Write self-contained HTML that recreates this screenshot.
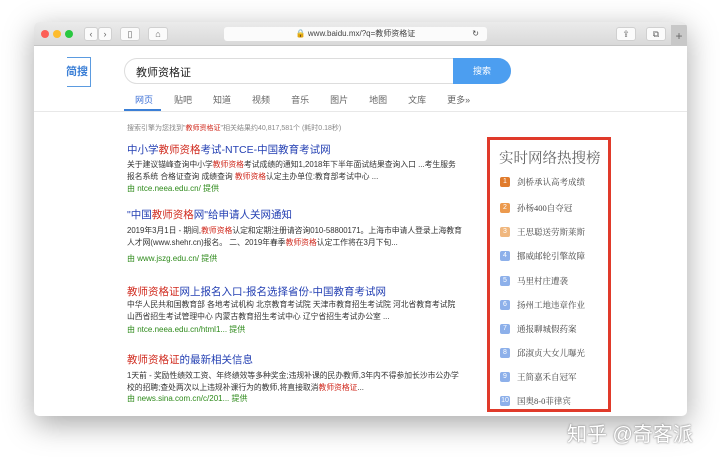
<!DOCTYPE html>
<html><head><meta charset="utf-8"><style>
*{margin:0;padding:0;box-sizing:border-box}
body{width:720px;height:463px;background:#fff;position:relative;overflow:hidden;font-family:"Liberation Sans","Noto Sans CJK SC",sans-serif}
.win{position:absolute;left:34px;top:22px;width:653px;height:394px;background:#fff;border-radius:5px;box-shadow:0 8px 30px rgba(0,0,0,.35);overflow:hidden}
.tb{position:absolute;left:0;top:0;width:653px;height:24px;background:linear-gradient(#ebebeb,#d9d9d9);border-bottom:1px solid #c4c4c4}
.dot{position:absolute;top:8px;width:8px;height:8px;border-radius:50%}
.btn{position:absolute;top:5px;height:14px;background:#fbfbfb;border:1px solid #d0d0d0;border-radius:3px;font-size:9px;color:#666;text-align:center;line-height:12px}
.addr{position:absolute;left:190px;top:5px;width:263px;height:14px;background:#fbfbfb;border-radius:3px;font-size:8px;color:#444;text-align:center;line-height:14px}
.a{position:absolute;white-space:nowrap}
.t{color:#2440b3;font-size:10.5px;line-height:13px}
.r{color:#d02a1e}
.d{color:#333;font-size:7.8px;line-height:12px}
.u{color:#2d8a1a;font-size:8px;line-height:10px}
.hot{position:absolute;left:487px;top:137px;width:124px;height:275px;border:3px solid #e03a2a;background:#fff}
.hi{position:absolute;left:10px;font-size:8.5px;line-height:12px;height:12px;color:#444;font-family:"Liberation Serif","Noto Serif CJK SC",serif;white-space:nowrap;display:flex;align-items:center}
.hi b{display:inline-block;width:10px;height:10px;border-radius:2px;color:#fff;font-size:7px;text-align:center;line-height:10px;font-weight:normal;margin-right:7px;font-family:"Liberation Sans",sans-serif}
</style></head><body>
<div class="win">
<div class="tb">
<div class="dot" style="left:7px;background:#fc5f57"></div>
<div class="dot" style="left:19px;background:#fdbc2e"></div>
<div class="dot" style="left:31px;background:#29c840"></div>
<div class="btn" style="left:50px;width:14px">‹</div><div class="btn" style="left:64px;width:14px">›</div>
<div class="btn" style="left:86px;width:20px">▯</div>
<div class="btn" style="left:114px;width:20px">⌂</div>
<div class="addr">🔒 www.baidu.mx/?q=教师资格证<span style="position:absolute;right:8px">↻</span></div>
<div class="btn" style="left:582px;width:20px">⇪</div>
<div class="btn" style="left:612px;width:20px">⧉</div>
<div style="position:absolute;left:637px;top:3px;width:16px;height:21px;background:#c8c8c8;color:#666;font-size:12px;text-align:center;line-height:22px">+</div>
</div>
</div>
<div class="a" style="left:67px;top:57px;width:24px;height:30px;border:1px solid #5b9be0;border-left:none"></div>
<div class="a" style="left:66px;top:63px;color:#3b7fd6;font-size:11px;font-weight:bold">简搜</div>
<div class="a" style="left:124px;top:58px;width:387px;height:26px;border:1px solid #ddd;border-radius:13px;background:#fff"></div>
<div class="a" style="left:453px;top:58px;width:58px;height:26px;background:#4c9ef0;border-radius:0 13px 13px 0;color:#fff;font-size:9px;text-align:center;line-height:26px">搜索</div>
<div class="a" style="left:136px;top:64px;font-size:11px;color:#222">教师资格证</div>
<div class="a" style="left:135px;top:93px;font-size:9px;color:#666">
<span style="color:#3b6fd6">网页</span><span style="margin-left:21px">贴吧</span><span style="margin-left:21px">知道</span><span style="margin-left:21px">视频</span><span style="margin-left:21px">音乐</span><span style="margin-left:21px">图片</span><span style="margin-left:21px">地图</span><span style="margin-left:21px">文库</span><span style="margin-left:21px">更多»</span></div>
<div class="a" style="left:34px;top:111px;width:653px;height:1px;background:#e8e8e8"></div>
<div class="a" style="left:124px;top:109px;width:37px;height:2px;background:#3b7fd6"></div>
<div class="a" style="left:127px;top:123px;font-size:7px;color:#888">搜索引擎为您找到"<span class="r">教师资格证</span>"相关结果约40,817,581个 (耗时0.18秒)</div>

<div class="a t" style="left:127px;top:144px">中小学<span class="r">教师资格</span>考试-NTCE-中国教育考试网</div>
<div class="a d" style="left:127px;top:159px">关于建议锚峰查询中小学<span class="r">教师资格</span>考试成绩的通知1,2018年下半年面试结果查询入口 ...考生服务<br>报名系统 合格证查询 成绩查询 <span class="r">教师资格</span>认定主办单位:教育部考试中心 ...</div>
<div class="a u" style="left:127px;top:184px">由 ntce.neea.edu.cn/ 提供</div>

<div class="a t" style="left:127px;top:209px">"中国<span class="r">教师资格</span>网"给申请人关网通知</div>
<div class="a d" style="left:127px;top:225px">2019年3月1日 - 期间,<span class="r">教师资格</span>认定和定期注册请咨询010-58800171。上海市申请人登录上海教育<br>人才网(www.shehr.cn)报名。 二、2019年春季<span class="r">教师资格</span>认定工作将在3月下旬...</div>
<div class="a u" style="left:127px;top:254px">由 www.jszg.edu.cn/ 提供</div>

<div class="a t" style="left:127px;top:286px"><span class="r">教师资格证</span>网上报名入口-报名选择省份-中国教育考试网</div>
<div class="a d" style="left:127px;top:299px">中华人民共和国教育部 各地考试机构 北京教育考试院 天津市教育招生考试院 河北省教育考试院<br>山西省招生考试管理中心 内蒙古教育招生考试中心 辽宁省招生考试办公室 ...</div>
<div class="a u" style="left:127px;top:325px">由 ntce.neea.edu.cn/html1... 提供</div>

<div class="a t" style="left:127px;top:354px"><span class="r">教师资格证</span>的最新相关信息</div>
<div class="a d" style="left:127px;top:370px">1天前 - 奖励性绩效工资、年终绩效等多种奖金;违规补课的民办教师,3年内不得参加长沙市公办学<br>校的招聘;查处两次以上违规补课行为的教师,将直接取消<span class="r">教师资格证</span>...</div>
<div class="a u" style="left:127px;top:394px">由 news.sina.com.cn/c/201... 提供</div>

<div class="hot">
<div class="a" style="left:9px;top:7px;font-size:14.5px;color:#666;font-family:'Liberation Serif','Noto Serif CJK SC',serif">实时网络热搜榜</div>
<div class="hi" style="top:36px"><b style="background:#e07b2c">1</b>剑桥承认高考成绩</div>
<div class="hi" style="top:62px"><b style="background:#ec9a4e">2</b>孙杨400自夺冠</div>
<div class="hi" style="top:86px"><b style="background:#f0b77e">3</b>王思聪送劳斯莱斯</div>
<div class="hi" style="top:110px"><b style="background:#8db0ea">4</b>挪威邮轮引擎故障</div>
<div class="hi" style="top:135px"><b style="background:#8db0ea">5</b>马里村庄遭袭</div>
<div class="hi" style="top:159px"><b style="background:#8db0ea">6</b>扬州工地违章作业</div>
<div class="hi" style="top:183px"><b style="background:#8db0ea">7</b>通报聊城假药案</div>
<div class="hi" style="top:207px"><b style="background:#8db0ea">8</b>邱淑贞大女儿曝光</div>
<div class="hi" style="top:231px"><b style="background:#8db0ea">9</b>王简嘉禾自冠军</div>
<div class="hi" style="top:255px"><b style="background:#8db0ea">10</b>国奥8-0菲律宾</div>
</div>
<div class="a" style="left:567px;top:418px;font-size:20px;color:#fff;text-shadow:0 0 2px #888,0 0 1px #999">知乎 @奇客派</div>
</body></html>
